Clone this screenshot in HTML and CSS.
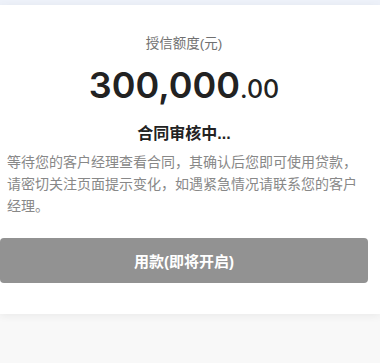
FILE: index.html
```html
<!DOCTYPE html>
<html lang="zh-CN">

<head>
    <meta charset="UTF-8">
    <meta name="viewport" content="width=device-width, initial-scale=1.0">
    <title>授信额度</title>
    <link rel="stylesheet" href="styles.css">
</head>

<body>
    <div class="top-strip"></div>
    <div class="card">
        <p class="label">授信额度(元)</p>
        <p class="amount">300,000<span class="cents">.00</span></p>
        <h3 class="title">合同审核中...</h3>
        <p class="desc">等待您的客户经理查看合同，其确认后您即可使用贷款，请密切关注页面提示变化，如遇紧急情况请联系您的客户经理。</p>
        <button class="use-btn" disabled>用款(即将开启)</button>
    </div>
    <div class="footer"></div>
</body>

</html>
```

FILE: styles.css
```css
body {
    margin: 0;
    width: 380px;
    background: #f8f8f8;
    font-family: "Liberation Sans", "Noto Sans CJK SC", sans-serif;
}

p,
h3 {
    margin: 0;
}

.top-strip {
    height: 5px;
    background: #edf1f9;
}

.card {
    background: #fff;
    padding: 30px 12px 31px 0;
    text-align: center;
    box-shadow: 0 2px 8px rgba(0, 0, 0, 0.06);
    position: relative;
}

.label {
    font-size: 13.5px;
    line-height: 18px;
    color: #707070;
}

.amount {
    margin-top: 12px;
    font-family: Inter, "Liberation Sans", sans-serif;
    font-size: 36px;
    line-height: 40px;
    font-weight: 600;
    color: #222;
}

.cents {
    font-size: 25px;
    font-weight: 500;
}

.title {
    margin-top: 15px;
    font-size: 16px;
    line-height: 20px;
    font-weight: bold;
    color: #222;
}

.desc {
    margin-top: 7px;
    padding: 0 4px 0 7px;
    text-align: left;
    font-size: 14px;
    line-height: 22px;
    color: #888;
}

.use-btn {
    display: block;
    margin-top: 21px;
    width: 100%;
    height: 45px;
    border: none;
    border-radius: 4px;
    background: #929292;
    color: #fff;
    font-family: inherit;
    font-size: 15px;
    font-weight: bold;
}

.footer {
    height: 60px;
}
```
